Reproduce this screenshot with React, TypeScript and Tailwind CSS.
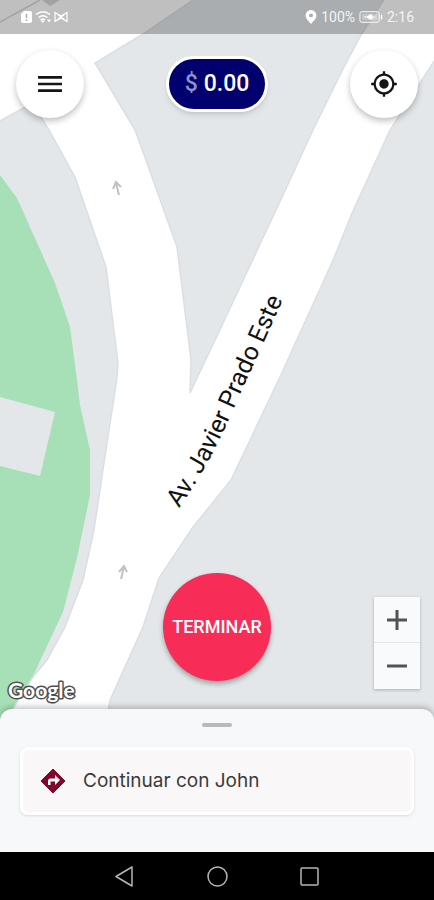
import { useState } from "react";
import { MdMenu, MdMyLocation } from "react-icons/md";

export default function App() {
  const [zoom, setZoom] = useState(18);

  return (
    <div className="flex min-h-screen flex-col bg-black font-[Roboto,sans-serif]">
      <main className="relative flex flex-1 flex-col overflow-hidden bg-[#e3e7ea] pb-4">
        <RoadMap />
        <StatusBar />

        <header className="relative flex items-center justify-between px-4 pt-4">
          <RoundButton label="Menú">
            <MdMenu className="size-8" />
          </RoundButton>
          <p className="flex h-14 items-center gap-1.5 rounded-full border-3 border-white bg-[#02006f] px-4 text-[23px] font-medium text-white shadow-md">
            <span className="text-[#8f8fca]">$</span>
            <span>0.00</span>
          </p>
          <RoundButton label="Mi ubicación">
            <MdMyLocation className="size-7" />
          </RoundButton>
        </header>

        <div className="relative mt-auto grid grid-cols-3 items-end">
          <GoogleLogo />
          <button className="mb-7 size-27 justify-self-center rounded-full bg-[#f72d58] text-lg font-medium text-white shadow-[0_3px_5px_rgba(0,0,0,0.3)]">
            TERMINAR
          </button>
          <div className="mr-3.5 mb-5 flex w-11.5 flex-col divide-y divide-[#e3e5e6] justify-self-end bg-[#f9fafb] shadow-[0_1px_3px_rgba(0,0,0,0.25)]">
            <ZoomButton label="Acercar" onClick={() => setZoom(zoom + 1)}>
              <path d="M0 10h20M10 0v20" />
            </ZoomButton>
            <ZoomButton label="Alejar" onClick={() => setZoom(zoom - 1)}>
              <path d="M0 10h20" />
            </ZoomButton>
          </div>
        </div>
      </main>

      {/* Bottom sheet */}
      <section className="relative -mt-4 flex flex-col rounded-t-xl bg-[#f6f8fa] px-5 pt-3.5 pb-[37px] shadow-[0_-2px_6px_rgba(0,0,0,0.25)]">
        <div className="h-1 w-7.5 self-center rounded-full bg-[#b7babc]" />
        <button className="mt-5 flex h-17 items-center gap-4 rounded-lg border-3 border-white bg-[#faf7f8] px-4 text-left shadow-[0_1px_3px_rgba(0,0,0,0.12)]">
          <TurnSign />
          <span className="font-[Inter,sans-serif] text-[19px] text-[#3a3a3c]">
            Continuar con John
          </span>
        </button>
      </section>

      <SystemNav />
    </div>
  );
}

function RoundButton({
  label,
  children,
}: {
  label: string;
  children: React.ReactNode;
}) {
  return (
    <button
      aria-label={label}
      className="flex size-17 items-center justify-center rounded-full bg-white text-[#151515] shadow-[0_3px_6px_rgba(0,0,0,0.25)]"
    >
      {children}
    </button>
  );
}

function ZoomButton({
  label,
  onClick,
  children,
}: {
  label: string;
  onClick: () => void;
  children: React.ReactNode;
}) {
  return (
    <button
      aria-label={label}
      onClick={onClick}
      className="flex h-11.5 items-center justify-center"
    >
      <svg
        viewBox="0 0 20 20"
        className="size-5 fill-none stroke-[#505355] stroke-3"
      >
        {children}
      </svg>
    </button>
  );
}

function TurnSign() {
  return (
    <svg viewBox="0 0 28 28" className="size-7">
      <path
        d="M14 2 26 14 14 26 2 14Z"
        fill="#86052b"
        stroke="#86052b"
        strokeLinejoin="round"
      />
      <path d="M9 18v-4q0-2.500 2.500-2.500H16V8l5 5-5 5v-3.500h-4.500V18z" fill="#fff" />
    </svg>
  );
}

function StatusBar() {
  return (
    <div className="relative flex h-8.5 items-center justify-between bg-black/25 px-5 text-sm text-[#f4f4f4]">
      <svg viewBox="0 0 48 14" className="h-3.5 w-12" fill="none">
        {/* sim */}
        <path d="M4 1h6q2 0 2 2v8q0 2-2 2H3q-2 0-2-2V4z" fill="#fff" />
        <path d="M6.5 4v4M6.5 9.5v1.5" stroke="#aaa" strokeWidth="1.5" />
        {/* wifi */}
        <path
          d="M16 4.500q7-5.500 14 0M18.500 7.500q4.500-3.500 9 0M20.500 10q2.500-2 4.500 0"
          stroke="#fff"
          strokeWidth="1.500"
        />
        <path d="M20.500 10.500h4.500l-2.200 2.500zM27 9.500h4l-2 3z" fill="#fff" />
        <path
          d="M35 2.500v9l6-3.500 6 3.500v-9L41 6zM37.500 4.500l7 5M44.500 4.500l-7 5"
          stroke="#fff"
          strokeWidth="1.200"
        />
      </svg>
      <div className="flex items-center gap-1">
        <svg viewBox="0 0 10 13" className="h-3.5 w-3 fill-white">
          <path
            fillRule="evenodd"
            d="M5 0a5 5 0 0 1 5 5c0 3-3 5.500-5 8C3 10.500 0 8 0 5a5 5 0 0 1 5-5zM5 3.200a1.800 1.800 0 1 0 0 3.600 1.800 1.800 0 0 0 0-3.600z"
          />
        </svg>
        <span>100%</span>
        <svg viewBox="0 0 25 13" className="h-3.5 w-6" fill="none">
          <rect x="1" y="1" width="20" height="11" rx="2" stroke="#fff" />
          <rect x="3" y="3" width="16" height="7" fill="#fff" fillOpacity=".3" />
          <path d="M5 6.500h4M13 6.500h4" stroke="#fff" />
          <path d="M8 6.500 11 4h3v5h-3z" fill="#fff" />
          <path d="M23.500 4v5" stroke="#fff" strokeWidth="1.500" />
        </svg>
        <span>2:16</span>
      </div>
    </div>
  );
}

function GoogleLogo() {
  return (
    <svg viewBox="0 0 80 32" className="ml-1.5 h-8 w-20">
      <text
        x="2"
        y="21"
        className="fill-white stroke-[#4b4f52] stroke-3 font-[Lato,sans-serif] text-[21px] font-bold [paint-order:stroke]"
        strokeLinejoin="round"
      >
        Google
      </text>
    </svg>
  );
}

function RoadMap() {
  return (
    <svg
      viewBox="0 0 434 725"
      preserveAspectRatio="xMidYMax slice"
      className="absolute inset-0 h-full w-full"
    >
      <rect width="434" height="725" fill="#e3e7ea" />

      {/* park */}
      <path
        d="M0 175 17 198 55 283 70 327 77 380 80 405 90 450V495L77 558 63 612 33 676 14 707 0 725Z"
        fill="#a7e0b6"
      />
      <path d="M0 397 55 412 40 476 0 466Z" fill="#e3e7ea" />

      {/* roads */}
      <path
        d="M-2 -2H196L143 34 95 63 135 130 143 152 177 247 191 360 190 393 217 336 284 193 313 130 341 73 361 35 385 -2H436V58L390 130 352 213 334 258 279 379 231 480 193 527 159 578 143 627 110 700 106 727H2L14 707 33 677 47 660 65 627 83 580 94 530 106 450 117 378 118 363 106 267 75 177 49 130 36 109 25 107 -2 122Z"
        fill="#fff"
        stroke="#dcdfe2"
        strokeWidth="1.500"
      />
      <path d="M0 22 40 0" stroke="#d6dadd" strokeWidth="1.500" />
      <path d="M42 0H60L50 6Z" fill="#d6dadd" />
      <g fill="none" stroke="#bfc3c6" strokeWidth="2">
        <path d="M119 195 116 183M113 189 116 182 121 187" />
        <path d="M121 579 124 567M119 572 124 566 127 572" />
      </g>

      <path id="avenida" d="M179 508Q209 466 234 408L300 262" fill="none" />
      <text className="fill-[#111] font-[Roboto,sans-serif] text-[25px]">
        <textPath href="#avenida">Av. Javier Prado Este</textPath>
      </text>
    </svg>
  );
}

function SystemNav() {
  return (
    <nav className="flex h-12 items-center justify-center gap-16 bg-black text-[#b5b5b5]">
      <NavButton label="Atrás">
        <path d="M21 5v19L5 14.500z" />
      </NavButton>
      <NavButton label="Inicio">
        <circle cx="14.500" cy="14.500" r="9.500" />
      </NavButton>
      <NavButton label="Recientes">
        <rect x="6" y="6" width="17" height="17" rx="1" />
      </NavButton>
    </nav>
  );
}

function NavButton({
  label,
  children,
}: {
  label: string;
  children: React.ReactNode;
}) {
  return (
    <button aria-label={label}>
      <svg
        viewBox="0 0 28 28"
        className="size-7 fill-none stroke-current stroke-[1.5px]"
        strokeLinejoin="round"
      >
        {children}
      </svg>
    </button>
  );
}
